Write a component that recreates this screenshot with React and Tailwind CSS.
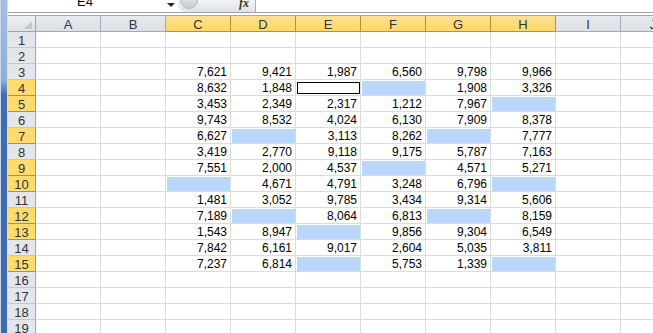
const COLS = ['A', 'B', 'C', 'D', 'E', 'F', 'G', 'H', 'I', 'J'];
const SEL_COLS = ['C', 'D', 'E', 'F', 'G', 'H'];
const SEL_ROWS = [4, 5, 7, 9, 10, 12, 13, 15];

// null = blank selected cell, '*' = active cell
const DATA = {
  3: ['7,621', '9,421', '1,987', '6,560', '9,798', '9,966'],
  4: ['8,632', '1,848', '*', null, '1,908', '3,326'],
  5: ['3,453', '2,349', '2,317', '1,212', '7,967', null],
  6: ['9,743', '8,532', '4,024', '6,130', '7,909', '8,378'],
  7: ['6,627', null, '3,113', '8,262', null, '7,777'],
  8: ['3,419', '2,770', '9,118', '9,175', '5,787', '7,163'],
  9: ['7,551', '2,000', '4,537', null, '4,571', '5,271'],
  10: [null, '4,671', '4,791', '3,248', '6,796', null],
  11: ['1,481', '3,052', '9,785', '3,434', '9,314', '5,606'],
  12: ['7,189', null, '8,064', '6,813', null, '8,159'],
  13: ['1,543', '8,947', null, '9,856', '9,304', '6,549'],
  14: ['7,842', '6,161', '9,017', '2,604', '5,035', '3,811'],
  15: ['7,237', '6,814', null, '5,753', '1,339', null],
};

const ROWS = Array.from({ length: 19 }, (_, i) => i + 1);
const font = { fontFamily: '"Liberation Sans", Arial, sans-serif' };

function Cell({ row, col }) {
  const ci = COLS.indexOf(col) - 2;
  const rowData = DATA[row];
  const value = rowData && ci >= 0 && ci < 6 ? rowData[ci] : '';
  return (
    <div className="h-[16px] border-r border-b border-[#dadcdd] bg-white overflow-hidden">
      {value === null ? (
        <div className="h-full pt-[1px] pl-[1px]">
          <div className="h-full bg-[#b7d7fb]" />
        </div>
      ) : value === '*' ? (
        <div className="h-full pt-[2px] pl-[1px] pb-[1px]">
          <div className="h-full border border-black" />
        </div>
      ) : (
        <div className="text-right pr-[3px] text-[12px] leading-[17px] text-black">{value}</div>
      )}
    </div>
  );
}

export default function App() {
  return (
    <div className="w-[653px] h-[333px] overflow-hidden bg-white flex" style={font}>
      {/* window frame strip */}
      <div className="w-[8px] shrink-0 flex">
        <div className="w-[1px] bg-[#c9d7ea]" />
        <div className="w-[6px] bg-[linear-gradient(#a6bfdf_0px,#8eaed8_80px,#3f6db3_95px,#3d6ab0_333px)]" />
        <div className="w-[1px] bg-[#d5dfec]" />
      </div>

      <div className="flex-1 flex flex-col min-w-0">
        {/* formula bar */}
        <div className="h-[13px] flex border-b border-[#9ea3a8] shrink-0">
          <div className="w-[170px] relative overflow-hidden">
            <div className="absolute left-[69px] top-[-5px] text-[13px] leading-[14px] text-black">E4</div>
            <div className="absolute left-[159px] top-[3px] w-0 h-0 border-l-[4px] border-r-[4px] border-t-[4px] border-l-transparent border-r-transparent border-t-[#222]" />
          </div>
          <div className="w-[78px] relative overflow-hidden rounded-bl-[8px] bg-[linear-gradient(#f2f3f5,#dfe2e6)] border-r border-[#a9aeb4]">
            <div className="absolute left-[2px] top-[-9px] w-[18px] h-[18px] rounded-full bg-[linear-gradient(#eceef1,#c9cdd2)] border border-[#b5b9be]" />
            <div
              className="absolute left-[61px] top-[-3px] text-[12px] leading-[12px] italic font-bold text-[#333]"
              style={{ fontFamily: '"Liberation Serif", serif' }}
            >
              fx
            </div>
          </div>
          <div className="flex-1" />
        </div>
        <div className="h-[2px] shrink-0" />
        <div className="h-[1px] bg-[#a4a9ae] shrink-0" />

        {/* sheet grid */}
        <div className="grid grid-cols-[28px_repeat(10,65px)] overflow-hidden">
          {/* corner */}
          <div className="h-[16px] relative border-r border-b border-[#9ea4ab] bg-[linear-gradient(#eef0f3,#dde1e6)]">
            <svg className="absolute right-[3px] bottom-[2px]" width="8" height="8" viewBox="0 0 8 8">
              <path d="M8 0 L8 8 L0 8 Z" fill="#c2c7cd" />
            </svg>
          </div>
          {COLS.map((c) => {
            const sel = SEL_COLS.includes(c);
            return (
              <div
                key={c}
                className={
                  sel
                    ? 'h-[16px] text-center text-[13px] leading-[17px] text-[#333] border-r border-b border-[#c58c2e] bg-[linear-gradient(#fbe196,#ffd861)]'
                    : 'h-[16px] text-center text-[13px] leading-[17px] text-[#333] border-r border-b border-[#a4aab1] bg-[linear-gradient(#e6e9ed,#dde1e6)]'
                }
              >
                {c}
              </div>
            );
          })}

          {ROWS.map((r) => {
            const sel = SEL_ROWS.includes(r);
            return [
              <div
                key={'h' + r}
                className={
                  sel
                    ? 'h-[16px] text-center text-[13px] leading-[18px] text-[#333] border-r border-b border-[#c58c2e] bg-[#ffdb6e]'
                    : 'h-[16px] text-center text-[13px] leading-[18px] text-[#333] border-r border-b border-r-[#9ea4ab] border-b-[#c3c8ce] bg-[#e3e6ea]'
                }
              >
                {r}
              </div>,
              ...COLS.map((c) => <Cell key={c + r} row={r} col={c} />),
            ];
          })}
        </div>
      </div>
    </div>
  );
}
